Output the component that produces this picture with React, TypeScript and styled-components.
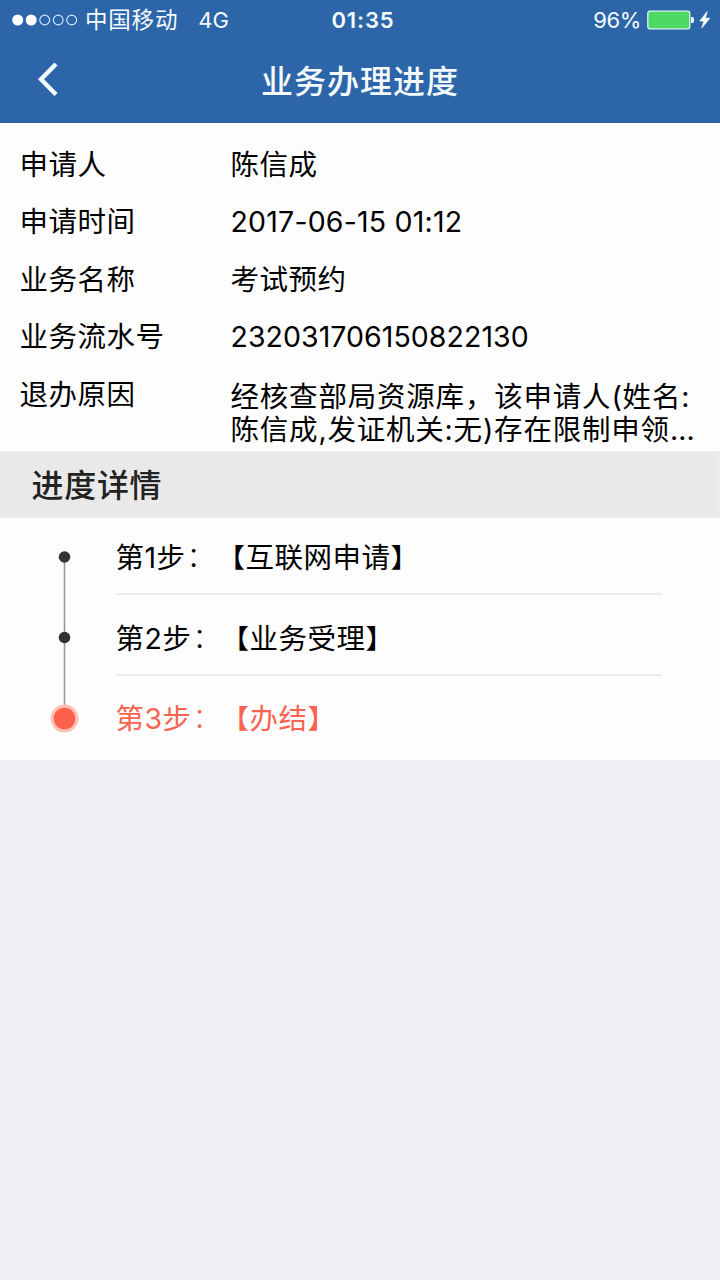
import React from "react";
import styled, { createGlobalStyle } from "styled-components";

const GlobalStyle = createGlobalStyle`
  * { box-sizing: border-box; }
  html, body { margin: 0; background: #efeff5; }
  body { font-family: Inter, "Noto Sans CJK SC", sans-serif; color: #000; }
`;

const Screen = styled.main`
  width: 720px;
  min-height: 1280px;
  background: #efeff5;
`;

const Header = styled.header`
  height: 123px;
  background: #2d65a9;
  color: #f4fbff;
  border-bottom: 1px solid #2a5d9c;
`;

const StatusBar = styled.div`
  height: 40px;
  display: grid;
  grid-template-columns: 1fr auto 1fr;
  align-items: center;
  padding: 0 9px 0 12px;
  font-size: 22px;
  line-height: 40px;
  white-space: nowrap;
`;

const StatusGroup = styled.div<{ $end?: boolean }>`
  display: flex;
  align-items: center;
  justify-content: ${(p) => (p.$end ? "flex-end" : "flex-start")};
`;

const Signal = styled.svg`
  width: 66px;
  height: 12px;
  margin-right: 7px;
`;

const Carrier = styled.span`
  font-size: 22.5px;
  letter-spacing: 0.8px;
`;

const Network = styled.span`
  margin-left: 20px;
  font-size: 22px;
  letter-spacing: 0.2px;
`;

const Clock = styled.span`
  font-size: 22px;
  font-weight: 600;
  letter-spacing: 0.9px;
  padding-left: 3px;
`;

const Percent = styled.span`
  font-size: 22px;
  letter-spacing: -0.4px;
`;

const Battery = styled.svg`
  width: 64px;
  height: 20px;
  margin-left: 6px;
`;

const NavBar = styled.div`
  height: 82px;
  display: grid;
  grid-template-columns: 96px 1fr 96px;
  align-items: center;
`;

const BackButton = styled.button`
  height: 80px;
  padding: 0 0 5px 37px;
  border: 0;
  background: none;
  color: inherit;
  display: flex;
  align-items: center;
`;

const Title = styled.h1`
  margin: 0;
  padding-top: 1px;
  font-size: 32px;
  font-weight: 500;
  line-height: 80px;
  letter-spacing: 1px;
  text-align: center;
`;

const Details = styled.dl`
  margin: 0;
  height: 328px;
  padding: 12.5px 20px 0 19.5px;
  background: #fdfdfd;
`;

const DetailRow = styled.div`
  display: grid;
  grid-template-columns: 211px 1fr;
  height: 57.6px;
  font-size: 28.5px;
  line-height: 57.6px;
  letter-spacing: 0.5px;
  white-space: nowrap;
`;

const Label = styled.dt``;

const Value = styled.dd<{ $multi?: boolean; $spacing?: number }>`
  margin: 0;
  padding-top: ${(p) => (p.$multi ? "14px" : "0")};
  line-height: ${(p) => (p.$multi ? "33.5px" : "inherit")};
  letter-spacing: ${(p) => p.$spacing ?? 0.5}px;
`;

const Line = styled.span`
  display: block;
  letter-spacing: 0.8px;
`;

const SectionTitle = styled.h2`
  margin: 0;
  height: 67px;
  padding: 1px 0 0 31.5px;
  background: #e9e9e9;
  border: 2px solid #ececec;
  border-left-width: 0;
  color: #222;
  font-size: 32px;
  font-weight: 500;
  line-height: 63px;
  letter-spacing: 0.7px;
`;

const Steps = styled.section`
  height: 242px;
  display: grid;
  grid-template-columns: 115.5px 546.5px;
  background: #fdfdfd;
`;

const Timeline = styled.svg`
  width: 116px;
  height: 242px;
`;

const StepList = styled.ol`
  list-style: none;
  margin: 0;
  padding: 0;
`;

const Step = styled.li<{ $active?: boolean }>`
  display: flex;
  height: 80.6px;
  font-size: 28.5px;
  line-height: 79.5px;
  letter-spacing: 0.5px;
  white-space: nowrap;
  color: ${(p) => (p.$active ? "#f9634f" : "#000")};
  &:not(:last-child) {
    background: linear-gradient(#ededed, #ededed) 0 75px / 100% 2px no-repeat;
  }
`;

const StepNumber = styled.span<{ $width: number }>`
  width: ${(p) => p.$width}px;
`;

const Colon = styled.span`
  display: inline-block;
  line-height: 1;
  transform: translate(1px, -1px);
  font-weight: 300;
`;

const Bracket = styled.span<{ $close?: boolean }>`
  display: inline-block;
  line-height: 1;
  transform: scaleY(0.93);
`;

const rows = [
  { label: "申请人", value: "陈信成" },
  { label: "申请时间", value: "2017-06-15 01:12", spacing: 0.2 },
  { label: "业务名称", value: "考试预约" },
  { label: "业务流水号", value: "232031706150822130", spacing: 0.05 },
];

const steps = [
  { no: "第1步", name: "互联网申请", width: 101 },
  { no: "第2步", name: "业务受理", width: 105 },
  { no: "第3步", name: "办结", width: 105 },
];

export default function App() {
  return (
    <Screen>
      <GlobalStyle />
      <Header>
        <StatusBar>
          <StatusGroup>
            <Signal viewBox="0 0 66 12">
              {[0, 1, 2, 3, 4].map((i) => (
                <circle
                  key={i}
                  cx={5.7 + i * 13.5}
                  cy="6"
                  r={i < 2 ? 5.5 : 4.9}
                  fill={i < 2 ? "#fff" : "none"}
                  stroke={i < 2 ? "none" : "#d6ecff"}
                  strokeWidth="1.1"
                />
              ))}
            </Signal>
            <Carrier>中国移动</Carrier>
            <Network>4G</Network>
          </StatusGroup>
          <Clock>01:35</Clock>
          <StatusGroup $end>
            <Percent>96%</Percent>
            <Battery viewBox="0 0 64 20">
              <rect x="0.8" y="1.2" width="42" height="17.6" rx="2" fill="#4cd964" stroke="#d9f8ee" strokeWidth="1.3" />
              <path d="M44 7h1.5q1.5 0 1.5 3t-1.5 3H44z" fill="#e8f6ff" />
              <path d="M60.2 1.5 52.8 11h4.2L54.8 18 62.8 8.3h-4.4z" fill="#fff" stroke="#fff" strokeWidth="0.7" />
            </Battery>
          </StatusGroup>
        </StatusBar>
        <NavBar>
          <BackButton aria-label="返回">
            <svg width="22" height="34" viewBox="0 0 22 34" fill="none" stroke="#f4fcff" strokeWidth="4.4">
              <path d="M19 2 4 17.2 19 32.5" />
            </svg>
          </BackButton>
          <Title>业务办理进度</Title>
        </NavBar>
      </Header>
      <Details>
        {rows.map((row) => (
          <DetailRow key={row.label}>
            <Label>{row.label}</Label>
            <Value $spacing={row.spacing}>{row.value}</Value>
          </DetailRow>
        ))}
        <DetailRow>
          <Label>退办原因</Label>
          <Value $multi>
            <Line>经核查部局资源库，该申请人(姓名:</Line>
            <Line>陈信成,发证机关:无)存在限制申领…</Line>
          </Value>
        </DetailRow>
      </Details>
      <SectionTitle>进度详情</SectionTitle>
      <Steps>
        <Timeline viewBox="0 0 116 242">
          <path d="M64.5 39V200" stroke="#999" strokeWidth="1.6" />
          <circle cx="64.5" cy="39" r="5.8" fill="#333" />
          <circle cx="64.5" cy="119.5" r="5.8" fill="#333" />
          <circle cx="64.5" cy="200.5" r="14" fill="#ffc1b5" />
          <circle cx="64.5" cy="200.5" r="10.8" fill="#fc614b" />
        </Timeline>
        <StepList>
          {steps.map((step, i) => (
            <Step key={step.no} $active={i === 2}>
              <StepNumber $width={step.width}>
                {step.no}
                <Colon>：</Colon>
              </StepNumber>
              <span>
                <Bracket>【</Bracket>
                {step.name}
                <Bracket $close>】</Bracket>
              </span>
            </Step>
          ))}
        </StepList>
      </Steps>
    </Screen>
  );
}
